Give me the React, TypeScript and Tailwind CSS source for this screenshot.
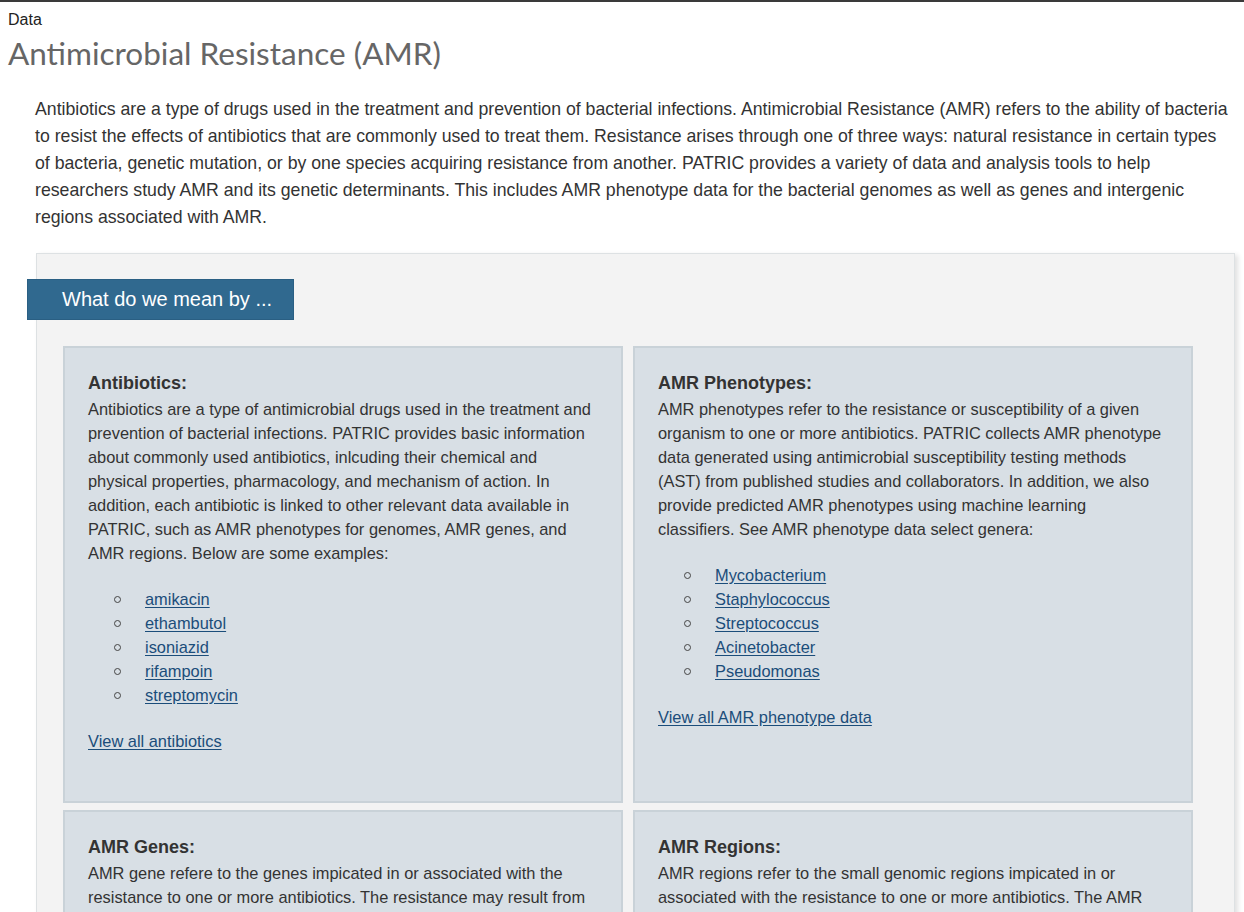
import React from "react";

type Card = {
  title: string;
  text: string;
  links?: string[];
  more?: string;
  right?: boolean;
};

function InfoCard({ card }: { card: Card }) {
  return (
    <div
      className={
        "bg-[#d8dfe5] border-2 border-[#c9d2d8] pt-[24px] pb-[48px] pl-[23px] text-[16.4px] leading-[24px] text-[#333] " +
        (card.right ? "pr-[26px]" : "pr-[22px]")
      }
    >
      <h3 className="font-bold text-[18px] leading-[22px] mb-[3px]">{card.title}</h3>
      <p>{card.text}</p>
      {card.links && (
        <ul className="mt-[22px]">
          {card.links.map((l) => (
            <li key={l} className="flex items-center">
              <span className="ml-[26px] w-[7px] h-[7px] rounded-full border border-[#444]" />
              <a href="#" className="ml-[24px] text-[#1b4d7a] underline underline-offset-2">
                {l}
              </a>
            </li>
          ))}
        </ul>
      )}
      {card.more && (
        <div className="mt-[22px]">
          <a href="#" className="text-[#1b4d7a] underline underline-offset-2">
            {card.more}
          </a>
        </div>
      )}
    </div>
  );
}

export default function App() {
  const cards: Card[] = [
    {
      title: "Antibiotics:",
      text: "Antibiotics are a type of antimicrobial drugs used in the treatment and prevention of bacterial infections. PATRIC provides basic information about commonly used antibiotics, inlcuding their chemical and physical properties, pharmacology, and mechanism of action. In addition, each antibiotic is linked to other relevant data available in PATRIC, such as AMR phenotypes for genomes, AMR genes, and AMR regions. Below are some examples:",
      links: ["amikacin", "ethambutol", "isoniazid", "rifampoin", "streptomycin"],
      more: "View all antibiotics",
    },
    {
      title: "AMR Phenotypes:",
      text: "AMR phenotypes refer to the resistance or susceptibility of a given organism to one or more antibiotics. PATRIC collects AMR phenotype data generated using antimicrobial susceptibility testing methods (AST) from published studies and collaborators. In addition, we also provide predicted AMR phenotypes using machine learning classifiers. See AMR phenotype data select genera:",
      links: ["Mycobacterium", "Staphylococcus", "Streptococcus", "Acinetobacter", "Pseudomonas"],
      more: "View all AMR phenotype data",
      right: true,
    },
    {
      title: "AMR Genes:",
      text: "AMR gene refere to the genes impicated in or associated with the resistance to one or more antibiotics. The resistance may result from alterations of the drug target, enzymatic inactivation of the drug, or active transport of the drug out of the cell.",
    },
    {
      title: "AMR Regions:",
      text: "AMR regions refer to the small genomic regions impicated in or associated with the resistance to one or more antibiotics. The AMR regions include intergenic regions such as promoters and regulatory elements.",
      right: true,
    },
  ];

  return (
    <div className="h-[912px] overflow-hidden bg-white border-t-2 border-[#3a3a3a] font-['Liberation_Sans',Arial,sans-serif] text-[#333]">
      <div className="pl-[8px] pt-[9px] text-[16px] leading-[18px] text-[#222]">Data</div>
      <h1 className="pl-[8px] mt-[2px] text-[31.5px] leading-[44px] text-[#666] font-['Lato',sans-serif] font-normal">
        Antimicrobial Resistance (AMR)
      </h1>
      <p className="pl-[35px] pr-[10px] mt-[21px] text-[17.7px] leading-[27px] text-[#333]">
        Antibiotics are a type of drugs used in the treatment and prevention of bacterial infections. Antimicrobial
        Resistance (AMR) refers to the ability of bacteria to resist the effects of antibiotics that are commonly used to
        treat them. Resistance arises through one of three ways: natural resistance in certain types of bacteria, genetic
        mutation, or by one species acquiring resistance from another. PATRIC provides a variety of data and analysis
        tools to help researchers study AMR and its genetic determinants. This includes AMR phenotype data for the
        bacterial genomes as well as genes and intergenic regions associated with AMR.
      </p>
      <div className="ml-[36px] mr-[9px] mt-[22px] bg-[#f3f3f3] border border-[#dde1e3] shadow-[3px_2px_5px_rgba(0,0,0,0.12)] pt-[25px] pl-[26px] pr-[41px] pb-[20px]">
        <div className="-ml-[36px] w-[267px] h-[41px] bg-[#30698f] border border-[#2a5f83] text-white text-[20px] leading-[39px] pl-[34px]">
          What do we mean by ...
        </div>
        <div className="grid grid-cols-2 gap-x-[10px] gap-y-[7px] mt-[26px]">
          {cards.map((c) => (
            <InfoCard key={c.title} card={c} />
          ))}
        </div>
      </div>
    </div>
  );
}
